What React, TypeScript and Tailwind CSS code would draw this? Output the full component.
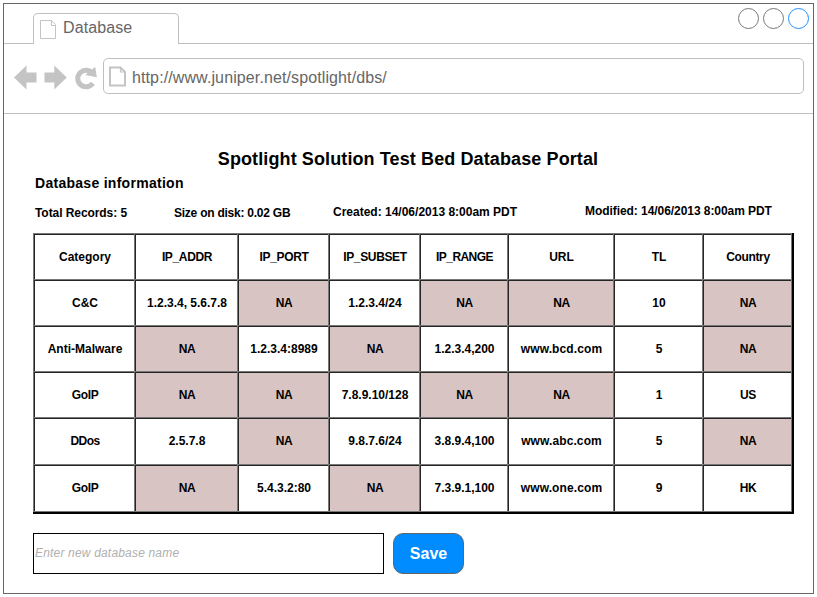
import React from "react";

const columns = ["Category", "IP_ADDR", "IP_PORT", "IP_SUBSET", "IP_RANGE", "URL", "TL", "Country"];

const records = [
  ["C&C", "1.2.3.4, 5.6.7.8", "NA", "1.2.3.4/24", "NA", "NA", "10", "NA"],
  ["Anti-Malware", "NA", "1.2.3.4:8989", "NA", "1.2.3.4,200", "www.bcd.com", "5", "NA"],
  ["GoIP", "NA", "NA", "7.8.9.10/128", "NA", "NA", "1", "US"],
  ["DDos", "2.5.7.8", "NA", "9.8.7.6/24", "3.8.9.4,100", "www.abc.com", "5", "NA"],
  ["GoIP", "NA", "5.4.3.2:80", "NA", "7.3.9.1,100", "www.one.com", "9", "HK"],
];

function textSpacing(text: string) {
  if (text === "IP_RANGE") return "tracking-[-0.55px]";
  if (text === "DDos") return "tracking-[-0.6px]";
  if (/^(IP_|Country|GoIP|NA|US|HK)/.test(text)) return "tracking-[-0.35px]";
  if (text.startsWith("www")) return "tracking-[0.1px]";
  return "tracking-normal";
}

function PageIcon({ thick = false }: { thick?: boolean }) {
  return thick ? (
    <svg width="18" height="21" viewBox="0 0 18 21" fill="none" stroke="#c4c4c4" strokeWidth="2" className="shrink-0">
      <path d="M1 1.5H11.5L16 6V19.5H1Z" />
      <path d="M11.5 1.5V6H16" strokeWidth="1.2" />
    </svg>
  ) : (
    <svg width="17" height="20" viewBox="0 0 17 20" fill="none" stroke="#c4c4c4" className="shrink-0">
      <path d="M.5 .5H11.5L15.5 4.5V18.5H.5Z" />
      <path d="M11.5 .5V5.5H15.5" />
    </svg>
  );
}

function TabStrip() {
  return (
    <div className="flex h-10 shrink-0 items-start">
      <div className="h-10 w-[29px] border-b border-[#c0c0c0]" />
      <div className="mt-[9px] flex h-[31px] w-[146px] rounded-t-[5px] border border-b-0 border-[#c0c0c0] pl-[6px] pt-[6px]">
        <PageIcon />
        <span className="-mt-[2px] ml-[6px] text-[16px] leading-[20px] tracking-[0.1px] text-[#666]">Database</span>
      </div>
      <div className="flex h-10 flex-1 justify-end gap-1 border-b border-[#c0c0c0] pr-1 pt-1">
        <div className="size-[21px] rounded-full border border-[#777]" />
        <div className="size-[21px] rounded-full border border-[#777]" />
        <div className="size-[21px] rounded-full border border-[#1e90ff]" />
      </div>
    </div>
  );
}

function AddressBar() {
  return (
    <div className="flex h-[70px] shrink-0 items-start border-b border-[#c0c0c0] pt-[14px]">
      <svg width="99" height="36" viewBox="0 0 99 36" className="shrink-0" fill="#c4c4c4">
        <path d="M10 19.5L22.5 7.5V14.5H32.5V24.5H22.5V31.5Z" />
        <path d="M62.8 19.5L50.3 7.5V14.5H40.5V24.5H50.3V31.5Z" />
        <path d="M88.6 15.4A8.3 8.3 0 1 0 88.8 25.3" fill="none" stroke="#c4c4c4" strokeWidth="5" />
        <path d="M91.2 8.8L92.9 19.3L81.3 17Z" />
      </svg>
      <div className="flex h-9 w-[701px] items-center rounded-[5px] border border-[#c0c0c0] pl-[5px]">
        <PageIcon thick />
        <span className="ml-[5px] mt-[3px] text-[16px] leading-[20px] tracking-[0.11px] text-[#666]">
          http://www.juniper.net/spotlight/dbs/
        </span>
      </div>
    </div>
  );
}

function RecordTable() {
  return (
    <div className="mt-[12px] w-[761px] border-b-2 border-r-2 border-black text-[12px] font-bold text-black">
      <div className="grid grid-cols-[101px_103px_91px_91px_88px_106px_89px_89px] grid-rows-[46px_46px_46px_46px_47px_47px] border-b border-r border-[#777]">
        {[columns, ...records].flatMap((row, r) =>
          row.map((text, c) => (
            <div
              key={`${r}-${c}`}
              className={`flex items-center justify-center whitespace-nowrap border-l border-t border-[#777] pl-[2px] shadow-[inset_1px_1px_0_#252525] ${text === "NA" ? "bg-[#d8c4c3]" : "bg-white"}`}
            >
              <span className={`leading-[16px] ${textSpacing(text)}`}>{text}</span>
            </div>
          )),
        )}
      </div>
    </div>
  );
}

export default function App() {
  return (
    <div className="h-[597px] w-[817px] bg-white pl-[3px] pt-[3px] font-['Liberation_Sans',Arial,sans-serif]">
      <div className="flex h-[591px] w-[811px] flex-col border border-[#666]">
        <TabStrip />
        <AddressBar />
        <main className="flex flex-col pl-[29px] text-black">
          <h1 className="mt-[34px] w-[750px] text-center text-[18px] font-bold leading-[22px] tracking-[0.11px]">
            Spotlight Solution Test Bed Database Portal
          </h1>
          <h2 className="mt-[4px] pl-[2px] text-[14px] font-bold leading-[18px] tracking-[0.28px]">Database information</h2>
          <div className="mt-[13px] flex h-4 whitespace-nowrap pl-[2px] text-[12px] font-bold leading-[16px]">
            <span className="w-[139px] tracking-[-0.07px]">Total Records: 5</span>
            <span className="w-[159px] tracking-[-0.24px]">Size on disk: 0.02 GB</span>
            <span className="-mt-px w-[252px]">Created: 14/06/2013 8:00am PDT</span>
            <span className="-mt-[2px] tracking-[-0.06px]">Modified: 14/06/2013 8:00am PDT</span>
          </div>
          <RecordTable />
          <div className="mt-[19px] flex gap-[9px]">
            <input
              className="h-[41px] w-[351px] border border-black pb-[2px] pl-[1px] text-[12px] italic tracking-[0.18px] outline-none placeholder:text-[#b0b0b0]"
              placeholder="Enter new database name"
            />
            <button className="h-[41px] w-[71px] rounded-[10px] border border-[#666] bg-[#008cff] text-[16px] font-bold text-white">
              Save
            </button>
          </div>
        </main>
      </div>
    </div>
  );
}
